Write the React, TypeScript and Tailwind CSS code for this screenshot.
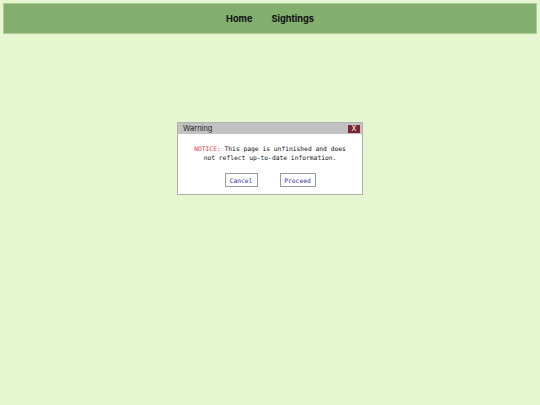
import React from "react";

const App = () => {
  return (
    <div className="min-h-[405px] w-full bg-[#e6f6d0] pt-[3px] font-['Inter',sans-serif]">
      <nav className="mx-[3px] flex h-[31px] items-center justify-center gap-[19px] border border-[#a9cf92] bg-[#82ae6e] pt-[1px] text-[9.2px] font-bold text-[#111]">
        <span>Home</span>
        <span>Sightings</span>
      </nav>
      <div className="flex justify-center pt-[88px]">
        <div className="w-[186px] border border-[#b0b0b0] bg-white">
          <div className="flex h-[11px] items-center justify-between bg-[#c2c2c2] pl-[5px] pr-[2px]">
            <span className="text-[7.5px] text-[#222]">Warning</span>
            <span className="flex h-[8px] w-[12px] items-center justify-center bg-[#7b2634] text-[7px] leading-none text-white">
              X
            </span>
          </div>
          <div className="px-[6px] pt-[10px] pb-[7px] text-center font-['DejaVu_Sans_Mono',monospace] text-[6.3px] leading-[9px] text-[#111]">
            <p>
              <span className="text-[#e83a3a]">NOTICE:</span> This page is unfinished and does
            </p>
            <p>not reflect up-to-date information.</p>
            <div className="mt-[11px] flex justify-center gap-[22px]">
              <button className="h-[14px] w-[33px] border border-[#9a9a9a] bg-white text-[6.3px] text-[#2f2fb0]">
                Cancel
              </button>
              <button className="h-[14px] w-[36px] border border-[#9a9a9a] bg-white text-[6.3px] text-[#2f2fb0]">
                Proceed
              </button>
            </div>
          </div>
        </div>
      </div>
    </div>
  );
};

export default App;
